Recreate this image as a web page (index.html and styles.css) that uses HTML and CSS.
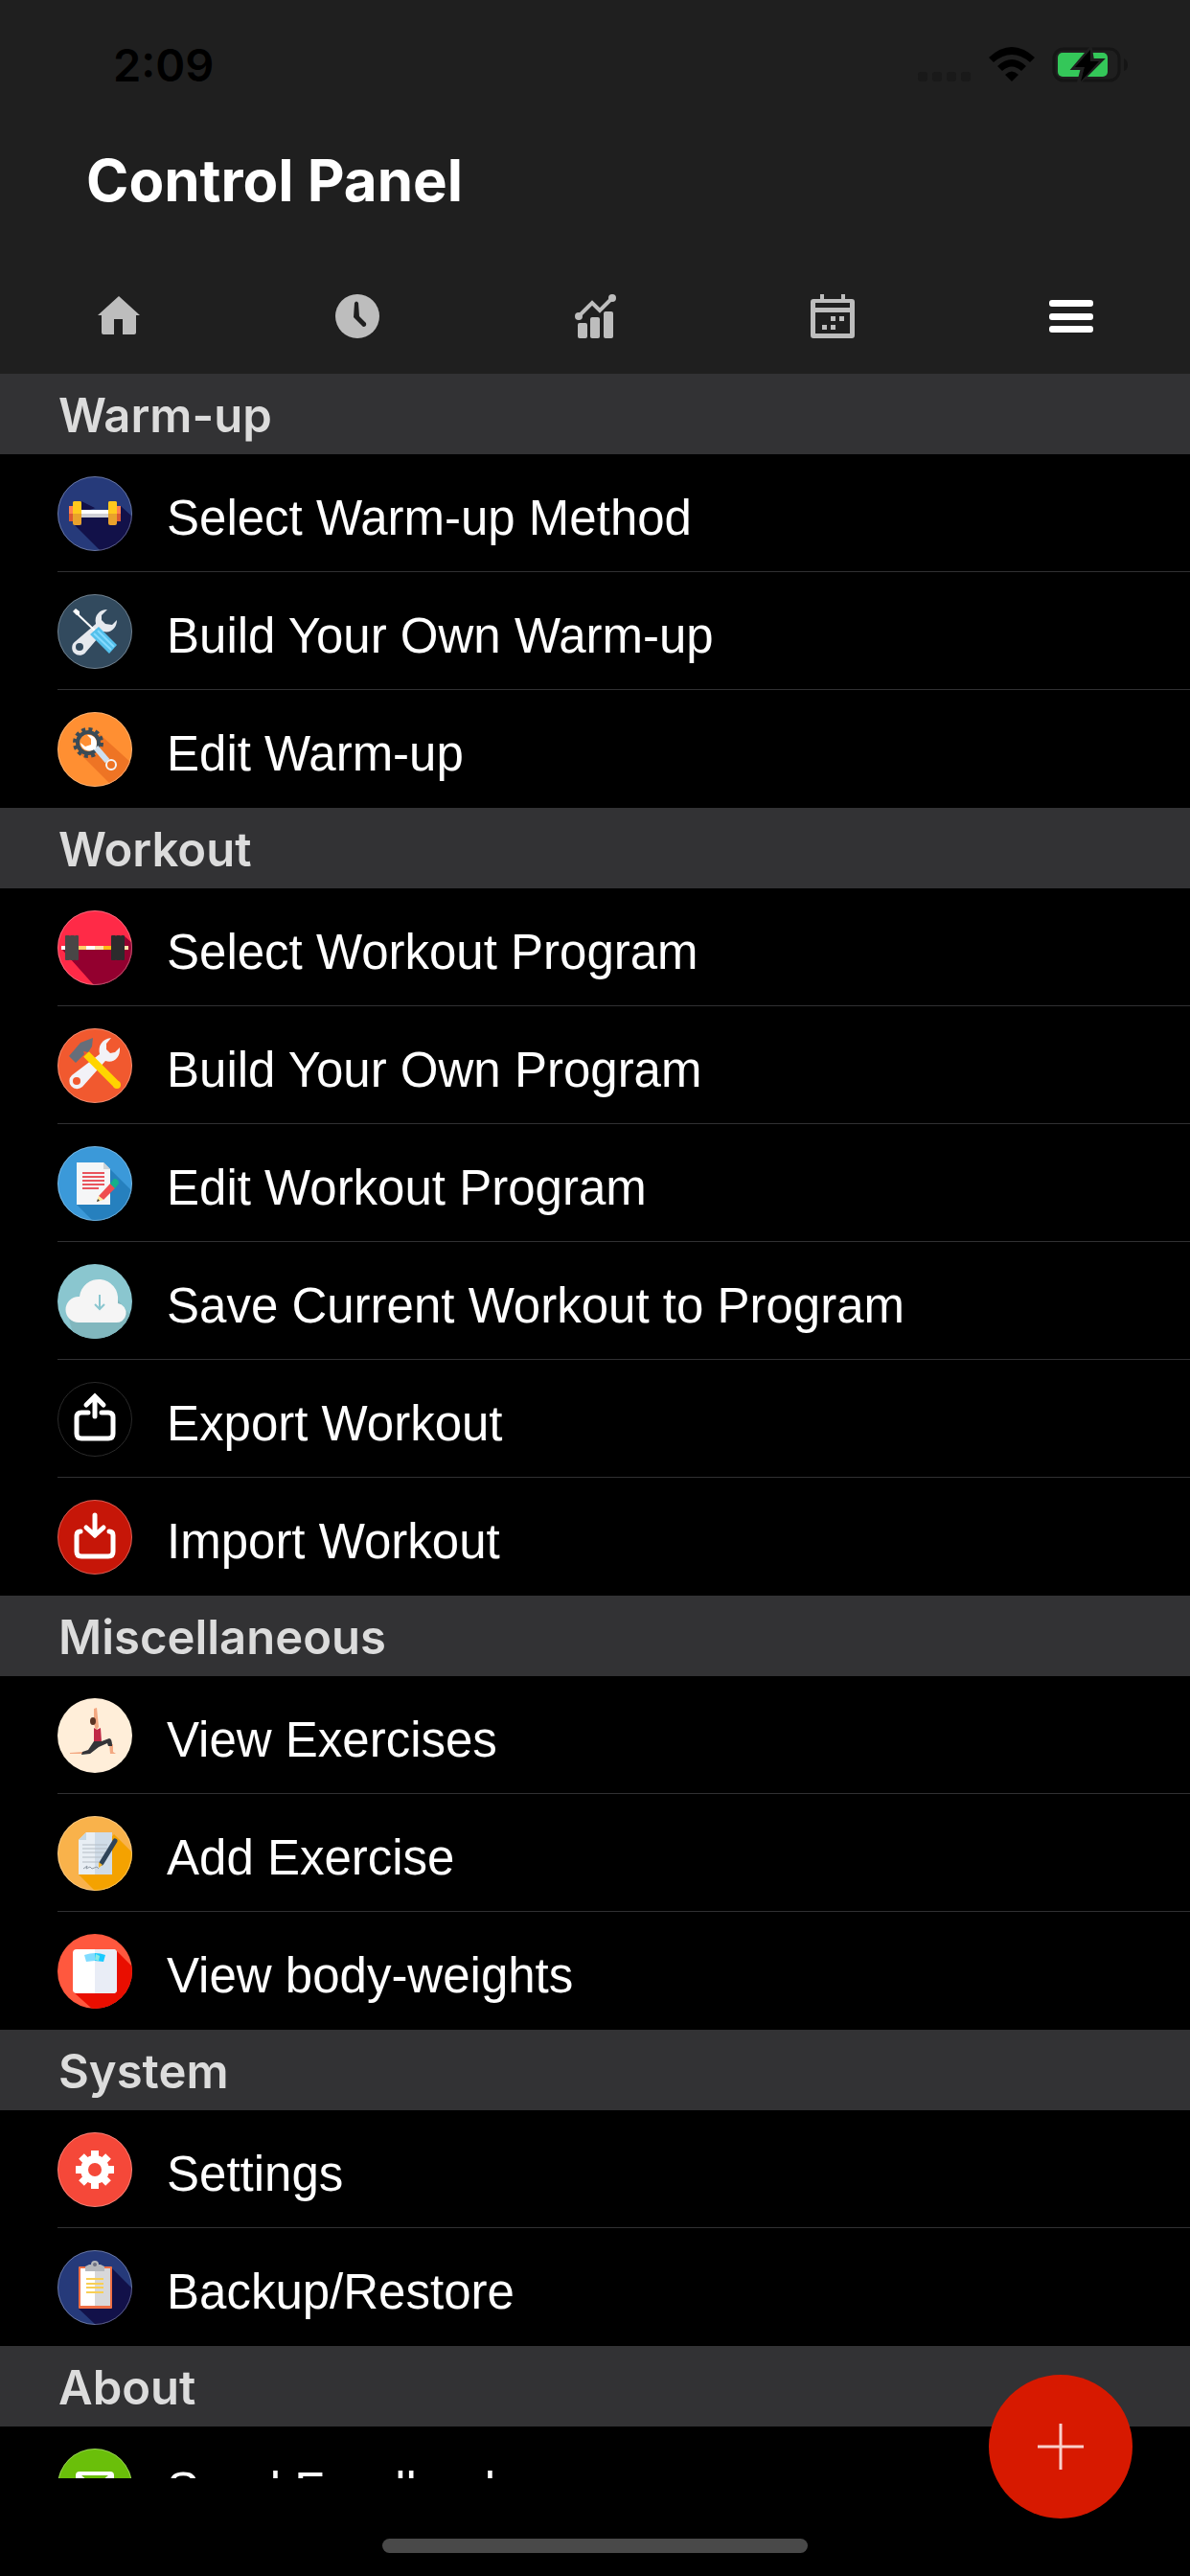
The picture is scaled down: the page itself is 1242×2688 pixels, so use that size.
FILE: index.html
```html
<!DOCTYPE html>
<html lang="en">
<head>
    <meta charset="UTF-8">
    <meta name="viewport" content="width=device-width, initial-scale=1.0">
    <title>Control Panel</title>
    <link rel="stylesheet" href="styles.css">
</head>
<body>
    <header class="top">
        <div class="status-bar">
            <span class="time">2:09</span>
            <div class="status-icons">
                <svg class="signal" width="55" height="37" viewBox="0 0 55 37" fill="#191919">
                    <rect x="0" y="26" width="10" height="10" rx="3"/>
                    <rect x="15" y="26" width="10" height="10" rx="3"/>
                    <rect x="30" y="26" width="10" height="10" rx="3"/>
                    <rect x="45" y="26" width="10" height="10" rx="3"/>
                </svg>
                <svg class="wifi" width="48" height="37" viewBox="0 0 48 37">
                    <path d="M0 11Q24 -11 48 11L43 16Q24 0 5 16Z"/>
                    <path d="M9 20Q24 6 39 20L34 25Q24 16 14 25Z"/>
                    <path d="M17 29Q24 22 31 29L24 36Z"/>
                </svg>
                <svg class="battery" width="80" height="37" viewBox="0 0 80 37">
                    <rect x="2" y="2" width="68" height="33" rx="10" fill="none" stroke="#151515" stroke-width="3"/>
                    <path d="M75 12q4 2 4 7t-4 6z" fill="#151515"/>
                    <rect x="6" y="6" width="52" height="25" rx="5" fill="#34c759"/>
                    <path d="M40 2L23 22h9l-4 15L51 14H42z" stroke="#1f1f1f" stroke-width="4"/>
                    <path d="M40 3L24 21h10l-4 15L49 15H40z"/>
                </svg>
            </div>
        </div>
        <h1>Control Panel</h1>
        <nav class="tabs">
            <a href="#home" aria-label="Home">
                <svg width="46" height="46" viewBox="0 0 46 46" fill="#bdbdbd"><path d="M23 2L45 22h-4v18q0 2-2 2H27V26h-9v16H7q-2 0-2-2V22H1Z"/></svg>
            </a>
            <a href="#history" aria-label="History">
                <svg width="46" height="46" viewBox="0 0 46 46"><circle cx="23" cy="23" r="23" fill="#bdbdbd"/><path d="M20 9q2-3 4 0l1 14 7 7q1 4-3 4L19 24Z" fill="#1f1f1f"/></svg>
            </a>
            <a href="#stats" aria-label="Statistics">
                <svg width="46" height="46" viewBox="0 0 46 46" fill="#bdbdbd">
                    <rect x="5" y="30" width="10" height="16" rx="2"/><rect x="18" y="24" width="10" height="22" rx="2"/><rect x="32" y="18" width="10" height="28" rx="2"/>
                    <path d="M6 23L20 9l8 8L41 4" fill="none" stroke="#bdbdbd" stroke-width="4"/>
                    <circle cx="6" cy="23" r="4"/><circle cx="41" cy="4" r="4"/>
                </svg>
            </a>
            <a href="#calendar" aria-label="Calendar">
                <svg width="46" height="46" viewBox="0 0 46 46" fill="#bdbdbd">
                    <path fill-rule="evenodd" d="M3 5h7V0h4v5h18V0h4v5h7q3 0 3 3v35q0 3-3 3H3q-3 0-3-3V8q0-3 3-3zM5 9v5h36V9zM5 19v22h36V19z"/>
                    <path d="M21 23h5v5h-5zM30 23h5v5h-5zM12 32h5v5h-5zM21 32h5v5h-5z"/>
                </svg>
            </a>
            <a href="#menu" aria-label="Menu" aria-current="page">
                <svg width="46" height="46" viewBox="0 0 46 46" fill="#fff"><rect y="6" width="46" height="7" rx="3"/><rect y="20" width="46" height="7" rx="3"/><rect y="33" width="46" height="7" rx="3"/></svg>
            </a>
        </nav>
    </header>

    <main class="list">
        <h2>Warm-up</h2>
        <ul>
            <li><a href="#select-warmup">
                <svg class="icon" viewBox="0 0 78 78">
                    <rect width="78" height="78" fill="#263a7a"/>
                    <path d="M18 51L45 78H78V42L66 31L53 40L25 26V51Z" fill="#121149"/>
                    <path d="M34 35L60 26V35Z" fill="#263a7a"/>
                    <path d="M12 31h4v8h-4zM62 31h4v8h-4z" fill="#ff8050"/><path d="M12 39h4v8h-4zM62 39h4v8h-4z" fill="#dc5a32"/>
                    <path d="M25 35h28v4H25z" fill="#fff"/><path d="M25 39h28v4H25z" fill="#d0d0d5"/>
                    <rect x="16" y="26" width="9" height="25" rx="2" fill="#e9a22c"/><rect x="53" y="26" width="9" height="25" rx="2" fill="#e9a22c"/>
                    <path d="M16 39V28q0-2 2-2h5q2 0 2 2v11zM53 39V28q0-2 2-2h5q2 0 2 2v11z" fill="#ffc91d"/>
                </svg>
                <span>Select Warm-up Method</span>
            </a></li>
            <li><a href="#build-warmup">
                <svg class="icon" viewBox="0 0 78 78">
                    <rect width="78" height="78" fill="#324a5e"/>
                    <path d="M52 16C44 16 38 22 40 31L19 49A8 8 0 1 0 30 60L48 39C56 41 62 35 62 27L57 32L50 31L46 27L46 22Z" fill="#e6e9ee"/>
                    <circle cx="23" cy="55" r="4" fill="#324a5e"/>
                    <path d="M19 19L39 38" stroke="#fff" stroke-width="2"/>
                    <path d="M16 18l3-3 4 3v3l-3 1z" fill="#fff"/>
                    <path d="M34 42L43 34L62 53L54 62Z" fill="#54c0eb"/>
                    <path d="M38 41L56 58M42 38L59 55" stroke="#84dbff" stroke-width="2"/>
                </svg>
                <span>Build Your Own Warm-up</span>
            </a></li>
            <li><a href="#edit-warmup">
                <svg class="icon" viewBox="0 0 78 78">
                    <rect width="78" height="78" fill="#ff8f32"/>
                    <path d="M22 42L58 78H78V54L44 23Z" fill="#ee7424"/>
                    <circle cx="32" cy="32" r="14" fill="none" stroke="#3b4b56" stroke-width="4" stroke-dasharray="4 3.33"/>
                    <circle cx="32" cy="32" r="11" fill="#ff8f32" stroke="#3b4b56" stroke-width="4"/>
                    <path d="M40 37L52 51" stroke="#cfe0ee" stroke-width="6"/>
                    <path d="M31 24C39 23 43 30 40 38C34 43 25 40 24 32L29 36L35 34L35 28Z" fill="#fff"/>
                    <circle cx="56" cy="55" r="5" fill="#ee7424" stroke="#f5f5f5" stroke-width="2"/>
                </svg>
                <span>Edit Warm-up</span>
            </a></li>
        </ul>

        <h2>Workout</h2>
        <ul>
            <li><a href="#select-program">
                <svg class="icon" viewBox="0 0 78 78">
                    <rect width="78" height="78" fill="#ff2a47"/>
                    <path d="M5 41L38 78H78V34L70 27V41Z" fill="#93002f"/>
                    <path d="M4 37h4v4H4zM30 37h9v4h-9z" fill="#fff"/><path d="M22 37h8v4h-8z" fill="#ffd06a"/><path d="M39 37h9v4h-9zM70 37h4v4h-4z" fill="#ffe4aa"/><path d="M48 37h8v4h-8z" fill="#ffb914"/>
                    <g fill="#484646"><rect x="8" y="26" width="5" height="26" rx="1"/><rect x="13" y="26" width="5" height="26" rx="1"/><rect x="18" y="26" width="4" height="26" rx="1"/></g>
                    <g fill="#2c2b2c"><rect x="56" y="26" width="5" height="26" rx="1"/><rect x="61" y="26" width="5" height="26" rx="1"/><rect x="66" y="26" width="4" height="26" rx="1"/></g>
                </svg>
                <span>Select Workout Program</span>
            </a></li>
            <li><a href="#build-program">
                <svg class="icon" viewBox="0 0 78 78">
                    <rect width="78" height="78" fill="#f1592f"/>
                    <path d="M56 10C46 11 42 19 44 27L15 49A8 8 0 1 0 26 61L50 34C58 37 66 31 65 20L60 25L55 26L51 22L51 16Z" fill="#f2f2f7"/>
                    <circle cx="20" cy="55" r="4" fill="#f1592f"/>
                    <path d="M30 27L62 59" stroke="#ffd400" stroke-width="8"/><circle cx="62" cy="59" r="4" fill="#ffd400"/>
                    <path d="M37 10L24 15L12 29L19 36L28 27L27 24L32 25L36 19Z" fill="#666e7a"/>
                </svg>
                <span>Build Your Own Program</span>
            </a></li>
            <li><a href="#edit-program">
                <svg class="icon" viewBox="0 0 78 78">
                    <rect width="78" height="78" fill="#3b99d9"/>
                    <path d="M20 61L37 78H78V47L55 24Z" fill="#2680be"/>
                    <path d="M20 17H48L55 24V61H20Z" fill="#f5f6f7"/><path d="M48 17V24H55Z" fill="#cfd3d6"/>
                    <path d="M26 28H49M26 32H49M26 36H49M26 40H49M26 44H43" stroke="#e9545c" stroke-width="2"/>
                    <path d="M43 52L55 39L60 44L48 56Z" fill="#ef4d4f"/><path d="M55 39L59 34Q64 34 64 39L60 44Z" fill="#14b08a"/><path d="M43 52L48 56L41 58Z" fill="#ffe69a"/><path d="M42 55L41 58L44 57Z" fill="#333"/>
                </svg>
                <span>Edit Workout Program</span>
            </a></li>
            <li><a href="#save-program">
                <svg class="icon plain" viewBox="0 0 78 78">
                    <rect width="78" height="78" fill="#8ac6cf"/>
                    <path d="M12 58L18 78H72L78 56L62 36Z" fill="#81b7be"/>
                    <path d="M22 61A13 13 0 0 1 22 34H23A20 20 0 0 1 63 38V41A10 10 0 0 1 60 61Z" fill="#f5f5f5"/>
                    <path d="M44 32V47M39 42L44 47L49 42" fill="none" stroke="#8ac6cf" stroke-width="2"/>
                </svg>
                <span>Save Current Workout to Program</span>
            </a></li>
            <li><a href="#export">
                <svg class="icon dark" viewBox="0 0 78 78">
                    <rect width="78" height="78" fill="#000"/>
                    <path d="M32 32H25Q20 32 20 37V54Q20 59 25 59H53Q58 59 58 54V37Q58 32 53 32H46M39 36V15M30 24L39 15L48 24" fill="none" stroke="#fff" stroke-width="5" stroke-linecap="round"/>
                </svg>
                <span>Export Workout</span>
            </a></li>
            <li><a href="#import">
                <svg class="icon" viewBox="0 0 78 78">
                    <rect width="78" height="78" fill="#c61608"/>
                    <path d="M24 33Q20 33 20 37V54Q20 59 25 59H53Q58 59 58 54V37Q58 33 54 33M39 16V37M30 29L39 37L48 29" fill="none" stroke="#fff" stroke-width="5" stroke-linecap="round"/>
                </svg>
                <span>Import Workout</span>
            </a></li>
        </ul>

        <h2>Miscellaneous</h2>
        <ul>
            <li><a href="#exercises">
                <svg class="icon plain" viewBox="0 0 78 78">
                    <rect width="78" height="78" fill="#ffeed9"/>
                    <path d="M38 11L41 10L43 30L40 34L38 26Z" fill="#f3a881"/>
                    <ellipse cx="37" cy="24" rx="3" ry="4" fill="#5c3524"/>
                    <path d="M54 48L58 48L58 56L61 58H55ZM13 57L27 56V58H13Z" fill="#f3a881"/>
                    <path d="M38 31L41 33L45 31L46 46L38 46Z" fill="#c02846"/>
                    <path d="M38 45L46 45L54 42Q57 42 57 50L53 50L52 47L43 51L34 58L25 59L26 56L32 54Z" fill="#343438"/>
                </svg>
                <span>View Exercises</span>
            </a></li>
            <li><a href="#add-exercise">
                <svg class="icon" viewBox="0 0 78 78">
                    <rect width="78" height="78" fill="#f9b24b"/>
                    <path d="M22 61L39 78H78V38L59 19Z" fill="#f4a200"/>
                    <path d="M22 25L30 17H57V61H22Z" fill="#e8eef4"/><path d="M39 17H57V61H39Z" fill="#d0dce8"/><path d="M22 25L30 17V25Z" fill="#c6d8e4"/>
                    <path d="M26 30H52M26 34H52M26 38H50M26 43H48M26 48H44" stroke="#b4bdc5" stroke-width="1"/>
                    <path d="M27 55l4-3-1 3 4-2 2 2 5-2 2 2" fill="none" stroke="#909aa5" stroke-width="1"/>
                    <path d="M60 26L46 49" stroke="#2f4459" stroke-width="5" stroke-linecap="round"/><path d="M43 48L47 51L43 54Z" fill="#f6b62a"/>
                </svg>
                <span>Add Exercise</span>
            </a></li>
            <li><a href="#body-weights">
                <svg class="icon plain" viewBox="0 0 78 78">
                    <rect width="78" height="78" fill="#ff583e"/>
                    <path d="M17 61L36 78H78V34L61 17Z" fill="#e90e00"/>
                    <rect x="16" y="16" width="46" height="46" rx="4" fill="#fff"/><path d="M39 16H58Q62 16 62 20V58Q62 62 58 62H39Z" fill="#e9edf6"/>
                    <path d="M28 22Q34 20 39 20V28L30 29Z" fill="#80dcff"/><path d="M39 20Q45 20 50 22L48 29L39 28Z" fill="#18cbff"/><path d="M39 27L40 21L44 23L43 28Z" fill="#8ae9e4"/>
                </svg>
                <span>View body-weights</span>
            </a></li>
        </ul>

        <h2>System</h2>
        <ul>
            <li><a href="#settings">
                <svg class="icon" viewBox="0 0 78 78">
                    <rect width="78" height="78" fill="#f54839"/>
                    <g stroke="#fff" stroke-width="8"><path d="M39 19V59M19 39H59M25 25L53 53M25 53L53 25"/></g>
                    <circle cx="39" cy="39" r="15" fill="#fff"/><circle cx="39" cy="39" r="7" fill="#f54839"/>
                </svg>
                <span>Settings</span>
            </a></li>
            <li><a href="#backup">
                <svg class="icon" viewBox="0 0 78 78">
                    <rect width="78" height="78" fill="#263a7a"/>
                    <path d="M22 61L40 78H78V40L57 19Z" fill="#121149"/>
                    <rect x="22" y="17" width="35" height="44" rx="1" fill="#ee6f45"/>
                    <path d="M24 19H39V58H24Z" fill="#fff"/><path d="M39 19H55V58H39Z" fill="#d8d8da"/>
                    <path d="M30 30H48M30 35H48M30 39H48M30 44H48" stroke="#f8cf55" stroke-width="2"/>
                    <path d="M29 22V17L33 15H35Q35 11 39 11Q43 11 43 15H45L49 17V22Z" fill="#b5b8bc"/><circle cx="39" cy="15" r="2" fill="#6d7180"/>
                </svg>
                <span>Backup/Restore</span>
            </a></li>
        </ul>

        <h2>About</h2>
        <ul>
            <li><a href="#feedback">
                <svg class="icon" viewBox="0 0 78 78">
                    <rect width="78" height="78" fill="#6abf0a"/>
                    <rect x="19" y="24" width="40" height="32" rx="4" fill="#fff"/>
                    <path d="M25 28H53L39 40Z" fill="#6abf0a"/>
                </svg>
                <span>Send Feedback</span>
            </a></li>
        </ul>
    </main>

    <footer class="bottom">
        <div class="home-indicator"></div>
    </footer>
    <button class="fab" aria-label="Add">
        <svg width="48" height="48" viewBox="0 0 48 48"><path d="M24 0V48M0 24H48" stroke="#f9d0cb" stroke-width="3"/></svg>
    </button>
</body>
</html>
```
FILE: styles.css
```css
body {
    margin: 0;
    height: 100vh;
    display: flex;
    flex-direction: column;
    position: relative;
    overflow: hidden;
    background: #000;
    color: #fff;
    font-family: "Liberation Sans", Arial, sans-serif;
}
a {
    color: inherit;
    text-decoration: none;
}
svg {
    display: block;
    flex: none;
}
.top {
    flex: none;
    background: #1f1f1f;
    font-family: Inter, sans-serif;
}
.status-bar {
    height: 134px;
    padding: 0 64px 0 118px;
    display: flex;
    align-items: center;
    justify-content: space-between;
}
.time {
    color: #000;
    font-size: 47px;
    font-weight: 600;
}
.status-icons {
    display: flex;
    align-items: center;
}
.wifi {
    margin: 0 18px 0 19px;
}
h1 {
    margin: 0;
    padding: 0 90px;
    height: 136px;
    line-height: 108px;
    font-size: 60px;
    font-weight: 700;
    box-sizing: border-box;
}
.tabs {
    display: grid;
    grid-template-columns: repeat(5, 1fr);
    height: 120px;
}
.tabs a {
    display: flex;
    align-items: center;
    justify-content: center;
}
.list {
    flex: 1;
    min-height: 0;
    overflow: hidden;
}
h2 {
    margin: 0;
    padding: 4px 61px 0;
    line-height: 80px;
    background: #323234;
    color: #dcdcdc;
    font-family: Inter, sans-serif;
    font-size: 49px;
    font-weight: 600;
}
ul {
    margin: 0;
    padding: 0 0 0 60px;
    list-style: none;
}
li a {
    display: flex;
    align-items: center;
    gap: 36px;
    padding: 23px 0 21px;
    border-bottom: 1px solid #303032;
    font-size: 51px;
    line-height: 60px;
}
li:last-child a {
    border-bottom-color: transparent;
}
li span {
    padding-top: 9px;
}
.icon {
    width: 78px;
    height: 78px;
    border-radius: 50%;
    outline: 1px solid rgba(255, 255, 255, 0.3);
    outline-offset: -1px;
}
.dark {
    outline-color: #2a2a2a;
}
.plain {
    outline: none;
}
.bottom {
    flex: none;
    height: 102px;
    padding-bottom: 24px;
    box-sizing: border-box;
    display: flex;
    align-items: flex-end;
    justify-content: center;
}
.home-indicator {
    width: 444px;
    height: 15px;
    border-radius: 8px;
    background: #494949;
}
.fab {
    position: absolute;
    right: 60px;
    bottom: 60px;
    width: 150px;
    height: 150px;
    padding: 0;
    border: none;
    border-radius: 50%;
    background: #d71900;
    display: flex;
    align-items: center;
    justify-content: center;
    cursor: pointer;
}
```
